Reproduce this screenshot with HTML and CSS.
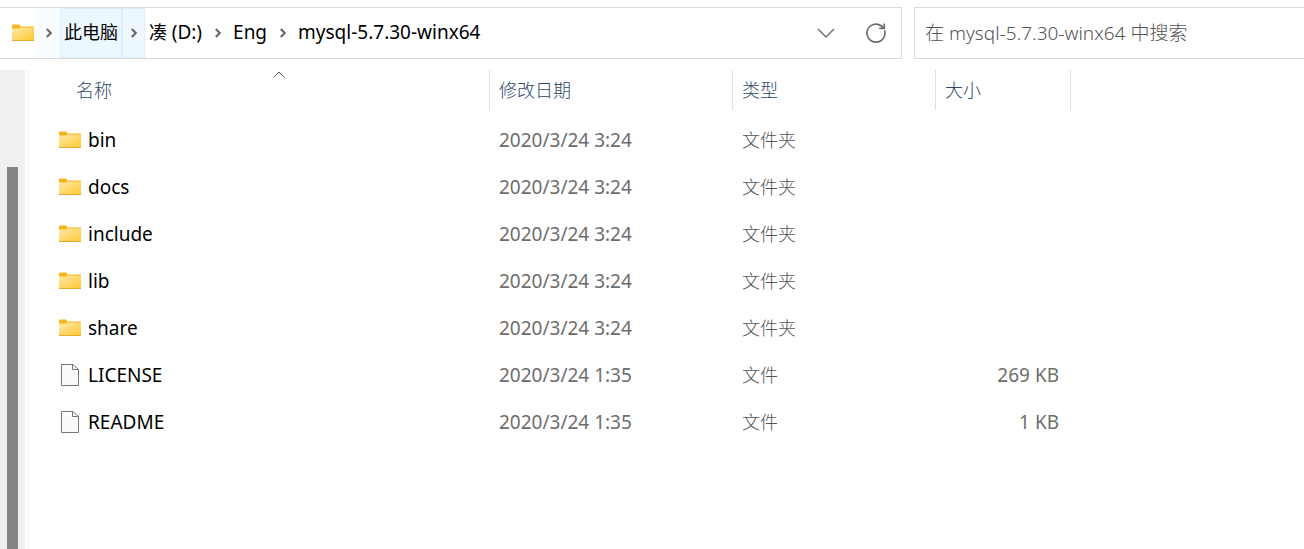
FILE: index.html
```html
<!DOCTYPE html>
<html lang="zh-CN">
<head>
<meta charset="utf-8">
<title>mysql-5.7.30-winx64</title>
<link rel="stylesheet" href="styles.css">
</head>
<body>
<svg class="defs" aria-hidden="true">
  <defs>
    <linearGradient id="front" x1="0" y1="0" x2="1" y2="1">
      <stop offset="0" stop-color="#ffe9a6"/><stop offset="1" stop-color="#ffc937"/>
    </linearGradient>
  </defs>
  <symbol id="folder" viewBox="0 0 22 18">
    <path d="M0 1.500Q0 .500 1 .500H7Q8 .500 8 1.500V2.500H22V16H0Z" fill="#f6b51e"/>
    <path d="M0 4.500H7L8.500 3.500H22V16H0Z" fill="url(#front)"/>
    <path d="M0 16.500H22" stroke="#eaa92c"/>
  </symbol>
  <symbol id="file" viewBox="0 0 18 22">
    <path d="M.5 .5H12L17.500 5.500V21.500H.5Z" fill="#fafafa" stroke="#767676"/>
    <path d="M11.500 .5V5.500H17.500" fill="none" stroke="#767676"/>
  </symbol>
  <symbol id="chevron" viewBox="0 0 6 10">
    <path d="M.8 1L4.800 5L.8 9" fill="none" stroke="#666" stroke-width="2"/>
  </symbol>
</svg>
<header class="toolbar">
  <nav class="address" aria-label="地址">
    <svg class="folder"><use href="#folder"/></svg>
    <button class="sep sep-faint" aria-label="展开"><svg class="chevron"><use href="#chevron"/></svg></button>
    <button class="crumb active">此电脑</button>
    <button class="sep active" aria-label="展开"><svg class="chevron"><use href="#chevron"/></svg></button>
    <button class="crumb">凑 <span class="latin">(D:)</span></button>
    <button class="sep" aria-label="展开"><svg class="chevron"><use href="#chevron"/></svg></button>
    <button class="crumb latin">Eng</button>
    <button class="sep" aria-label="展开"><svg class="chevron"><use href="#chevron"/></svg></button>
    <button class="crumb latin">mysql-5.7.30-winx64</button>
    <span class="spacer"></span>
    <button class="tool" aria-label="历史记录"><svg width="18" height="10" viewBox="0 0 18 10"><path d="M1 1L9 9L17 1" fill="none" stroke="#6b6b6b" stroke-width="1.400"/></svg></button>
    <button class="tool" aria-label="刷新"><svg width="20" height="20" viewBox="0 0 20 20"><path d="M18.600 7.500A9 9 0 1 1 15.500 3L18.300 5.200M18.300 .5V5.400H13.200" fill="none" stroke="#6b6b6b" stroke-width="1.600"/></svg></button>
  </nav>
  <input class="search" type="text" aria-label="搜索" placeholder="在 mysql-5.7.30-winx64 中搜索">
</header>
<main class="content">
  <div class="scrollbar"><div class="thumb"></div></div>
  <table class="files">
    <colgroup><col class="c-name"><col class="c-date"><col class="c-type"><col class="c-size"></colgroup>
    <thead>
      <tr>
        <th><div class="head head-name"><svg class="sort" viewBox="0 0 12 7"><path d="M.7 6.300L6 1L11.300 6.300" fill="none" stroke="#555"/></svg>名称</div></th>
        <th><div class="head">修改日期</div></th>
        <th><div class="head">类型</div></th>
        <th><div class="head">大小</div></th>
      </tr>
    </thead>
    <tbody>
      <tr><td><div class="name latin"><svg class="icon"><use href="#folder"/></svg>bin</div></td><td class="latin">2020/3/24 3:24</td><td>文件夹</td><td></td></tr>
      <tr><td><div class="name latin"><svg class="icon"><use href="#folder"/></svg>docs</div></td><td class="latin">2020/3/24 3:24</td><td>文件夹</td><td></td></tr>
      <tr><td><div class="name latin"><svg class="icon"><use href="#folder"/></svg>include</div></td><td class="latin">2020/3/24 3:24</td><td>文件夹</td><td></td></tr>
      <tr><td><div class="name latin"><svg class="icon"><use href="#folder"/></svg>lib</div></td><td class="latin">2020/3/24 3:24</td><td>文件夹</td><td></td></tr>
      <tr><td><div class="name latin"><svg class="icon"><use href="#folder"/></svg>share</div></td><td class="latin">2020/3/24 3:24</td><td>文件夹</td><td></td></tr>
      <tr><td><div class="name latin"><svg class="icon page"><use href="#file"/></svg>LICENSE</div></td><td class="latin">2020/3/24 1:35</td><td>文件</td><td class="size latin">269 KB</td></tr>
      <tr><td><div class="name latin"><svg class="icon page"><use href="#file"/></svg>README</div></td><td class="latin">2020/3/24 1:35</td><td>文件</td><td class="size latin">1 KB</td></tr>
    </tbody>
  </table>
</main>
</body>
</html>
```
FILE: styles.css
```css
* { box-sizing: border-box; }
body {
  margin: 0;
  height: 100vh;
  display: flex;
  flex-direction: column;
  overflow: hidden;
  background: #fff;
  color: #000;
  font: 18px/24px "Noto Sans", "Noto Sans CJK SC", sans-serif;
}
button, input { font: inherit; color: inherit; }
button { border: 0; padding: 0; background: none; }
svg { display: block; flex: none; }
.defs { position: absolute; width: 0; height: 0; }

.toolbar { display: flex; gap: 12px; padding-top: 7px; }
.address {
  flex: 1;
  height: 52px;
  display: flex;
  align-items: stretch;
  padding-left: 12px;
  border: 1px solid #d9d9d9;
  border-left: 0;
}
.folder { width: 22px; height: 18px; align-self: center; margin-right: 3px; }
.crumb { padding: 0 4px 2px; white-space: nowrap; }
.sep { width: 23px; display: grid; place-items: center; }
.sep-faint { background: #fafdff; }
.active { background: #edf7ff; box-shadow: inset 0 0 0 1px #d9efff; }
.chevron { width: 6px; height: 10px; }
.spacer { flex: 1; }
.tool { width: 50px; display: grid; place-items: center; }
.search {
  width: 390px;
  height: 52px;
  padding: 0 10px;
  border: 1px solid #d9d9d9;
  border-right: 0;
  border-radius: 0;
  background: #fff;
  font-size: 19px;
  font-weight: 300;
}
.search::placeholder { color: #555; opacity: 1; }

.content { flex: 1; display: flex; align-items: flex-start; padding-top: 11px; }
.scrollbar {
  align-self: stretch;
  width: 25px;
  padding: 97px 7px 0;
  background: #f0f0f0;
}
.thumb { height: 100%; background: #858585; }
.content::before {
  content: "";
  order: 1;
  align-self: stretch;
  width: 2px;
  margin-left: 2px;
  background: #f6f6f6;
}
.files {
  order: 2;
  margin-left: 21px;
  table-layout: fixed;
  width: 1021px;
  border-collapse: collapse;
}
.c-name { width: 440px; }
.c-date { width: 243px; }
.c-type { width: 203px; }
.c-size { width: 135px; }
th { padding: 0 0 6px; font-weight: 300; text-align: left; color: #2f4768; }
.head { position: relative; height: 40px; padding: 8px 9px; border-right: 1px solid #e2e2e2; }
.head-name { padding-left: 26px; }
.sort { position: absolute; top: 1px; left: calc(50% + 3px); width: 12px; height: 7px; }
td { height: 47px; padding: 0 9px; color: #555; font-weight: 300; }
.latin { font-size: 19px; font-weight: 400; }
td.latin { color: #6d6d6d; }
.name { display: flex; align-items: center; gap: 7px; color: #000; }
.icon { width: 22px; height: 18px; }
.page { height: 22px; }
td.size { padding-right: 12px; text-align: right; }
```
